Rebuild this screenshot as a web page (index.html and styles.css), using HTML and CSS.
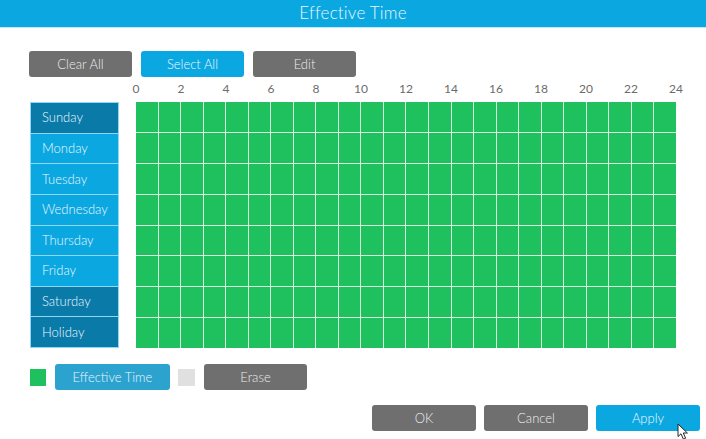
FILE: index.html
```html
<!DOCTYPE html>
<html lang="en">
<head>
<meta charset="utf-8">
<title>Effective Time</title>
<link rel="stylesheet" href="styles.css">
</head>
<body>
<div class="dialog">
  <header class="title-bar">Effective Time</header>

  <div class="toolbar">
    <button class="btn btn-gray">Clear All</button>
    <button class="btn btn-blue">Select All</button>
    <button class="btn btn-gray">Edit</button>
  </div>

  <div class="scale">
    <span>0</span><span>2</span><span>4</span><span>6</span><span>8</span><span>10</span><span>12</span>
    <span>14</span><span>16</span><span>18</span><span>20</span><span>22</span><span>24</span>
  </div>

  <div class="schedule">
    <ul class="days">
      <li class="day day-dark">Sunday</li>
      <li class="day">Monday</li>
      <li class="day">Tuesday</li>
      <li class="day">Wednesday</li>
      <li class="day">Thursday</li>
      <li class="day">Friday</li>
      <li class="day day-dark">Saturday</li>
      <li class="day day-dark">Holiday</li>
    </ul>
    <div class="grid" id="grid"></div>
  </div>

  <div class="legend">
    <span class="swatch swatch-on"></span>
    <button class="btn btn-legend">Effective Time</button>
    <span class="swatch swatch-off"></span>
    <button class="btn btn-gray btn-erase">Erase</button>
  </div>

  <div class="footer">
    <button class="btn btn-gray btn-wide">OK</button>
    <button class="btn btn-gray btn-wide">Cancel</button>
    <button class="btn btn-blue btn-wide">Apply</button>
  </div>

  <svg class="pointer" width="14" height="18" viewBox="0 0 14 18">
    <path d="M1 1 L1 13.5 L4 10.8 L6.4 16.2 L8.6 15.2 L6.3 10 L10.4 10 Z" fill="#fff" stroke="#222" stroke-width="1" stroke-linejoin="round"/>
  </svg>
</div>
<script>
  // 8 days x 24 hours, all slots active
  const grid = document.getElementById('grid');
  for (let i = 0; i < 8 * 24; i++) {
    const c = document.createElement('div');
    c.className = 'cell';
    grid.appendChild(c);
  }
</script>
</body>
</html>
```

FILE: styles.css
```css
* { box-sizing: border-box; }

html, body {
  margin: 0;
  padding: 0;
  background: #fff;
}

body {
  font-family: "Lato", "Open Sans", sans-serif;
  font-weight: 300;
  width: 706px;
  height: 439px;
  overflow: hidden;
}

.dialog {
  position: relative;
  width: 706px;
  height: 439px;
}

.title-bar {
  height: 28px;
  background: #0ba7e1;
  border-bottom: 1px solid #bfe9f8;
  color: #eaf8fe;
  font-size: 17px;
  line-height: 26px;
  text-align: center;
  letter-spacing: 0.2px;
}

.btn {
  font-family: inherit;
  font-weight: 300;
  height: 26px;
  width: 103px;
  border: none;
  border-radius: 3px;
  font-size: 13px;
  color: #ececec;
  padding: 0;
  cursor: default;
}

.btn-wide { width: 104px; }
.btn-gray { background: #6f6f6f; }
.btn-blue { background: #0ba7e1; color: #eef9fe; }
.btn-legend { background: #2ca2cf; width: 115px; color: #e9f6fc; }

.toolbar {
  display: flex;
  gap: 9px;
  padding: 23px 0 0 29px;
}

.scale {
  display: flex;
  justify-content: space-between;
  width: 560px;
  margin: 4px 0 0 126px;
  height: 21px;
  font-size: 12px;
  font-weight: 400;
  line-height: 16px;
  color: #6c6c6c;
}

.scale span {
  width: 20px;
  text-align: center;
}

.schedule {
  display: flex;
  gap: 17px;
  padding-left: 30px;
}

.days {
  list-style: none;
  margin: 0;
  padding: 0;
  width: 89px;
  height: 246px;
  display: grid;
  grid-template-rows: repeat(8, 1fr);
  gap: 1px;
  background: #8fd8f4;
  border: 1px solid #8fd8f4;
}

.day {
  background: #0ba7e1;
  color: #eaf7fd;
  font-size: 13px;
  display: flex;
  align-items: center;
  padding-left: 11px;
  padding-bottom: 1px;
  white-space: nowrap;
}

.day-dark { background: #0a7aa9; }

.grid {
  width: 540px;
  height: 246px;
  display: grid;
  grid-template-columns: repeat(24, 1fr);
  grid-template-rows: repeat(8, 1fr);
  gap: 1px;
  background: #d9f1df;
}

.cell { background: #1fc15f; }

.legend {
  display: flex;
  align-items: center;
  gap: 9px;
  padding: 16px 0 0 30px;
}

.swatch {
  width: 16px;
  height: 17px;
  display: block;
}

.swatch-on { background: #1fc15f; }
.swatch-off { background: #e0e0e0; width: 17px; margin-left: -1px; }

.footer {
  display: flex;
  justify-content: flex-end;
  gap: 8px;
  padding: 15px 6px 0 0;
}

.pointer {
  position: absolute;
  left: 677px;
  top: 423px;
}
```
